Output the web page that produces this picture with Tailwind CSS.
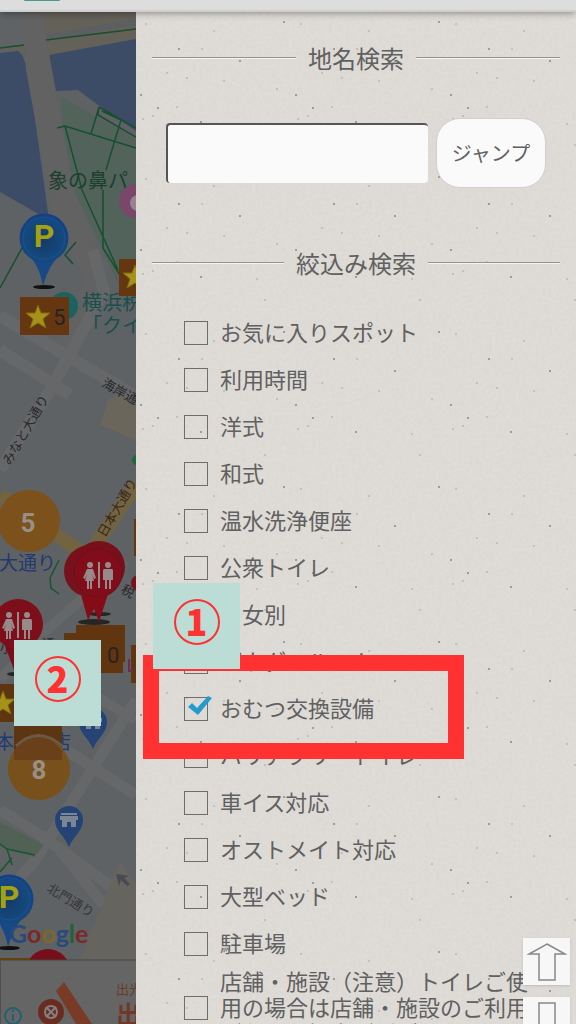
<!DOCTYPE html>
<html lang="ja">

<head>
    <meta charset="UTF-8">
    <meta name="viewport" content="width=device-width, initial-scale=1.0">
    <title>トイレマップ - 検索</title>
    <script src="https://cdn.jsdelivr.net/npm/@tailwindcss/browser@4"></script>
</head>

<body class="h-screen overflow-hidden bg-[#5f6062] font-['Noto_Sans_CJK_JP',sans-serif] text-[#606060]">
    <div class="relative flex h-full flex-col overflow-hidden">

        <!-- Browser bar -->
        <header class="relative z-10 h-3 shrink-0 border-b-2 border-[#cfcfcf] bg-[#dddddd] shadow-md shadow-black/20">
            <div class="ml-6 h-px w-9 rounded-b bg-[#479a92]"></div>
        </header>

        <main class="flex min-h-0 flex-1">

            <!-- Dimmed map -->
            <section class="relative w-34 shrink-0 overflow-hidden bg-[#5f6264]" aria-label="地図">
                <svg class="absolute top-0 left-0" width="136" height="1012" viewBox="0 12 136 1012" font-family="'Noto Sans CJK JP', sans-serif">
                    <defs>
                        <radialGradient id="blue" cx="50%" cy="55%" r="55%">
                            <stop offset="0" stop-color="#123c68" />
                            <stop offset="0.75" stop-color="#15497f" />
                            <stop offset="1" stop-color="#123f86" />
                        </radialGradient>
                        <g id="parking">
                            <ellipse cx="0" cy="49" rx="11" ry="2" fill="#111" />
                            <path d="M-17 16Q-5 26-1 48Q5 26 17 16Z" fill="#174987" />
                            <circle r="24.500" fill="url(#blue)" />
                            <circle r="21" fill="none" stroke="#1c528b" stroke-width="1" />
                            <text y="9" text-anchor="middle" font-family="Roboto, sans-serif" font-size="32" font-weight="700" fill="#a6a112">P</text>
                        </g>
                        <g id="people" fill="#98898a">
                            <circle cx="-9" cy="-10" r="3" />
                            <path d="M-12-6h6l3 9-2 1-2-5 2 7h-2v8h-2v-8h-1v8h-2v-8h-2l2-7-2 5-2-1z" />
                            <rect x="-1" y="-13" width="2" height="26" />
                            <circle cx="9" cy="-10" r="3" />
                            <path d="M5-6h8q1 0 1 2v9h-2v-7v16h-2V5H8v9H6V-2v7H4v-9q0-2 1-2z" />
                        </g>
                        <path id="star" d="M0-12 3-4 12-4 5 2 8 11 0 6-8 11-5 2-12-4-3-4Z" fill="#a49318" stroke="#7f6614" />
                        <g id="shop">
                            <path d="M-14 0a14 14 0 1 1 28 0c0 11-9 15-14 27C-5 15-14 11-14 0Z" fill="#254374" />
                            <path d="M-8-7H8v2H-8zM-9-4H9v4H-9zM-7 0H7v7H2V2h-4v5h-5z" fill="#7b8695" />
                        </g>
                    </defs>

                    <!-- Land and water -->
                    <path d="M0 12H136V40L48 57 0 50Z" fill="#646159" />
                    <path d="M0 12H22L24 45 0 48Z" fill="#606365" />
                    <path d="M45 38 136 22" stroke="#5c5f62" stroke-width="6" />
                    <path d="M0 53 18 51Q24 54 27 72L31 90 49 220 0 192Z" fill="#3c4b66" />
                    <path d="M49 55 136 39V131L98 105 78 90 56 91Z" fill="#3c4b66" />
                    <path d="M22 12H42L57 100 74 190 103 266 94 310 70 365 55 345 85 280 50 200 26 70Z" fill="#626262" />
                    <path d="M61 97 90 113 136 139V290L120 288 92 228 74 190 62 125Z" fill="#52635b" />
                    <path d="M0 48 24 45M46 40 136 29" fill="none" stroke="#18502e" stroke-width="1.500" />
                    <path d="M57 128 65 126 136 148M65 126 82 190 118 270M99 107 91 134M99 107 136 128M99 107 98 115 136 137M102 111 121 120 106 170M103 190V248L120 275M22 248 0 288M76 242 65 255 73 264 68 258" fill="none" stroke="#174f2f" stroke-width="1.500" />

                    <!-- Streets -->
                    <g fill="none" stroke="#666768">
                        <path d="M0 316 135 396M0 350 70 395M93 250 104 292 49 392 0 470" stroke-width="12" />
                        <path d="M125 560 40 636 0 680M72 682 136 720" stroke-width="10" />
                        <path d="M136 700 34 862 0 900M66 750 136 795M0 810 45 838 136 905M60 850 136 945" stroke-width="11" />
                    </g>
                    <path d="M108 400 120 394 136 405V440L100 425Z" fill="#6a665c" />
                    <path d="M120 860 136 885V960H80Z" fill="#66645e" />
                    <path d="M0 495 85 555M92 550 136 485" stroke="#726441" stroke-width="14" />
                    <path d="M0 822 44 845 34 857 0 845Z" fill="#526156" />
                    <path d="M59 560 50 578 51 588 59 594M0 844 7 849 35 855M7 849 12 865M0 872 12 858" fill="none" stroke="#17572d" stroke-width="1.500" />

                    <!-- Place names -->
                    <text x="48" y="188" font-size="20" fill="#1b402e">象の鼻パ</text>
                    <circle cx="136" cy="201" r="17" fill="#7a4669" />
                    <circle cx="138" cy="203" r="8" fill="#998292" />
                    <circle cx="64" cy="306" r="14" fill="#1d6260" />
                    <text x="82" y="310" font-size="20" fill="#174f4d">横浜税</text>
                    <text x="82" y="333" font-size="20" fill="#174f4d">「クイ</text>
                    <g font-size="13" fill="#29292b">
                        <text transform="translate(101 386) rotate(29)">海岸通り</text>
                        <text transform="translate(10 466) rotate(-60)">みなと大通り</text>
                        <text transform="translate(105 538) rotate(-60)" fill="#38271c">日本大通り</text>
                        <text transform="translate(46 891) rotate(31)" fill="#353638">北門通り</text>
                        <text x="42" y="648">通</text>
                        <text x="0" y="652">小</text>
                        <text x="120" y="592" transform="rotate(30 120 592)">税</text>
                    </g>
                    <text x="-1" y="570" font-size="19" fill="#213a70">大通り</text>
                    <text x="-5" y="749" font-size="19" fill="#213a70">本大通店</text>

                    <!-- Pins and badges -->
                    <use href="#parking" x="44" y="238" />
                    <rect x="20" y="297" width="49" height="38" fill="#663610" />
                    <use href="#star" x="38" y="317" />
                    <text x="53" y="325" font-family="Roboto, sans-serif" font-size="22" fill="#252423">5</text>
                    <rect x="119" y="259" width="17" height="37" fill="#663610" />
                    <use href="#star" x="135" y="277" />
                    <circle cx="137" cy="460" r="5" fill="#186c39" />
                    <circle cx="29" cy="521" r="31" fill="#7d511b" />
                    <text x="28" y="532" text-anchor="middle" font-family="Roboto, sans-serif" font-size="26" font-weight="700" fill="#989086">5</text>
                    <rect x="134" y="519" width="2" height="37" fill="#663610" />
                    <path d="M64 633h12v-8h49v37h-2v11H64Z" fill="#61350f" />
                    <rect x="131" y="645" width="5" height="38" fill="#61350f" />
                    <path d="M129 659v12h4" fill="none" stroke="#692c57" stroke-width="2" />
                    <text x="107" y="663" font-family="Roboto, sans-serif" font-size="22" fill="#252423">0</text>
                    <circle cx="139" cy="583" r="8" fill="#79121b" />
                    <ellipse cx="100" cy="614" rx="11" ry="2" fill="#252525" />
                    <ellipse cx="94" cy="622" rx="16" ry="3" fill="#252525" />
                    <path d="M80 591 88 620 94 609 99 622 109 591Z" fill="#850c16" />
                    <circle cx="90" cy="571" r="26" fill="#77121c" />
                    <circle cx="99" cy="567" r="26" fill="#78101b" />
                    <circle cx="98" cy="573" r="24" fill="#800d19" stroke="#6b111a" />
                    <use href="#people" x="99" y="575" />
                    <path d="M3 640 14 670 25 640Z" fill="#7c0d18" />
                    <ellipse cx="15" cy="674" rx="8" ry="2" fill="#252525" />
                    <circle cx="18" cy="624" r="25" fill="#7d0f1a" />
                    <use href="#people" x="18" y="625" />
                    <rect x="0" y="684" width="25" height="38" fill="#5f3511" />
                    <use href="#star" x="3" y="703" />
                    <use href="#shop" x="93" y="722" />
                    <rect x="14" y="726" width="48" height="34" fill="#5c3513" />
                    <circle cx="39" cy="769" r="31" fill="#78501b" />
                    <path d="M14 751Q38 720 62 751V760H14Z" fill="#69401a" />
                    <path d="M16 746Q38 725 62 746" fill="none" stroke="#6a5a45" stroke-width="3" />
                    <text x="39" y="779" text-anchor="middle" font-family="Roboto, sans-serif" font-size="26" font-weight="700" fill="#989086">8</text>
                    <use href="#shop" x="69" y="820" />
                    <path d="M116 874 129 876 124 878 130 884 127 886 121 880 119 886Z" fill="#474a4e" />
                    <use href="#parking" x="9" y="899" />

                    <text x="9" y="943" font-family="Lato, sans-serif" font-size="25" font-weight="700"><tspan fill="#294b7c">G</tspan><tspan fill="#7c2828">o</tspan><tspan fill="#806820">o</tspan><tspan fill="#294b7c">g</tspan><tspan fill="#246039">l</tspan><tspan fill="#7c2828">e</tspan></text>
                    <circle cx="48" cy="971" r="22" fill="#780e19" />

                    <!-- Banner -->
                    <rect x="0" y="960" width="136" height="64" fill="#656565" />
                    <path d="M0 960H136" stroke="#454545" />
                    <path d="M0 960V1024" stroke="#505050" stroke-width="2" />
                    <path d="M0 959H30" stroke="#65400f" stroke-width="2" />
                    <path d="M56 991 64 982 92 1024H76Z" fill="#793b28" />
                    <circle cx="51" cy="1012" r="13" fill="#692c1e" />
                    <g fill="none" stroke="#858080" stroke-width="2">
                        <circle cx="51" cy="1012" r="6" />
                        <path d="M46 1007 56 1017M56 1007 46 1017" />
                    </g>
                    <circle cx="13" cy="1016" r="8" fill="none" stroke="#20606f" stroke-width="2" />
                    <path d="M13 1014V1021M13 1010V1012" stroke="#20606f" stroke-width="2" />
                    <text x="116" y="994" font-size="13" fill="#6c392b">出光</text>
                    <text x="116" y="1024" font-size="25" font-weight="700" fill="#713827">出光</text>
                </svg>
            </section>

            <!-- Search panel -->
            <aside class="relative min-w-0 flex-1 bg-[#dfdcd8]">
                <!-- Recycled paper texture -->
                <svg class="absolute inset-0 h-full w-full" aria-hidden="true">
                    <defs>
                        <filter id="grain">
                            <feTurbulence type="fractalNoise" baseFrequency="0.3" numOctaves="3" seed="4" />
                            <feColorMatrix values="0 0 0 0 0.4  0 0 0 0 0.38  0 0 0 0 0.34  0.5 0 0 0 -0.17" />
                        </filter>
                        <pattern id="specks" width="155" height="155" patternUnits="userSpaceOnUse">
                            <g fill="#8b8781">
                                <circle cx="148" cy="10" r="1" /><circle cx="43" cy="37" r="1" /><circle cx="104" cy="49" r="1" />
                                <circle cx="5" cy="83" r="1" /><circle cx="22" cy="96" r="1" /><circle cx="65" cy="110" r="1" />
                            </g>
                            <g fill="#bbb7b1">
                                <circle cx="10" cy="12" r="1" /><circle cx="66" cy="37" r="1" /><circle cx="78" cy="19" r="1" />
                                <circle cx="31" cy="61" r="1" /><circle cx="51" cy="66" r="1" /><circle cx="88" cy="69" r="1" />
                                <circle cx="17" cy="104" r="1" /><circle cx="41" cy="95" r="1" /><circle cx="7" cy="107" r="1" />
                                <circle cx="121" cy="112" r="1" /><circle cx="129" cy="133" r="1" /><circle cx="141" cy="77" r="1" />
                            </g>
                        </pattern>
                    </defs>
                    <rect width="100%" height="100%" filter="url(#grain)" opacity="0.3" />
                    <rect width="100%" height="100%" fill="url(#specks)" />
                </svg>

                <div class="relative px-4">
                    <h2 class="flex h-[92px] items-center gap-3 text-2xl">
                        <span class="h-[2px] flex-1 border-t border-[#8f9496] bg-[#f3f3f2]"></span>
                        地名検索
                        <span class="h-[2px] flex-1 border-t border-[#8f9496] bg-[#f3f3f2]"></span>
                    </h2>

                    <form class="mt-3.5 flex items-center gap-2 px-3.5">
                        <input type="text" aria-label="地名"
                            class="h-15 min-w-0 flex-1 rounded-sm border-t-2 border-l-2 border-[#555555] bg-[#fafafa] px-3 text-xl">
                        <button type="button"
                            class="h-17.5 w-27.5 rounded-3xl border border-[#d0d0d0] bg-[#fafafa] text-xl">ジャンプ</button>
                    </form>

                    <h2 class="mt-[29px] flex h-[92px] items-center gap-3 text-2xl">
                        <span class="h-[2px] flex-1 border-t border-[#8f9496] bg-[#f3f3f2]"></span>
                        絞込み検索
                        <span class="h-[2px] flex-1 border-t border-[#8f9496] bg-[#f3f3f2]"></span>
                    </h2>

                    <div id="filters" class="pr-8 pl-8 text-[22px] leading-[26px]"></div>
                </div>
            </aside>
        </main>

        <!-- Scroll buttons -->
        <div class="absolute top-[938px] right-1.5 flex flex-col gap-3">
            <button type="button" aria-label="上へ" class="flex h-[47px] w-[47px] items-center justify-center bg-[#f7f7f7] shadow">
                <svg width="40" height="40" viewBox="0 0 40 40" fill="none" stroke="#888" stroke-width="1.500">
                    <path d="M20 2 38 12H28V38H12V12H2Z" />
                </svg>
            </button>
            <button type="button" aria-label="下へ" class="flex h-[47px] w-[47px] items-center justify-center bg-[#f7f7f7] shadow">
                <svg width="40" height="40" viewBox="0 0 40 40" fill="none" stroke="#888" stroke-width="1.500">
                    <path d="M20 38 38 28H28V2H12V28H2Z" />
                </svg>
            </button>
        </div>

        <!-- Step annotations -->
        <div class="pointer-events-none absolute top-[655px] left-[143px] h-[104px] w-[321px] border-16 border-[#ff3131]"></div>
        <div class="absolute top-[583px] left-[153px] flex h-[86px] w-[87px] items-center justify-center bg-[#bbddd5] pb-2">
            <span class="flex h-[46px] w-[46px] items-center justify-center rounded-full border-2 border-[#ff3131] pb-1 text-4xl font-black text-[#ff3131]">1</span>
        </div>
        <div class="absolute top-[640px] left-[14px] flex h-[86px] w-[87px] items-center justify-center bg-[#bbddd5] pb-2">
            <span class="flex h-[46px] w-[46px] items-center justify-center rounded-full border-2 border-[#ff3131] pb-1 text-4xl font-black text-[#ff3131]">2</span>
        </div>
    </div>

    <script>
        const filters = [
            'お気に入りスポット', '利用時間', '洋式', '和式', '温水洗浄便座', '公衆トイレ', '男女別',
            'パウダールーム', 'おむつ交換設備', 'バリアフリートイレ', '車イス対応', 'オストメイト対応',
            '大型ベッド', '駐車場', '店舗・施設（注意）トイレご使用の場合は店舗・施設のご利用が必要な場合がございます'
        ];

        const list = document.getElementById('filters');
        filters.forEach((name) => {
            const checked = name === 'おむつ交換設備';
            const row = document.createElement('label');
            row.className = 'flex min-h-[47px] items-center gap-3';
            row.innerHTML = `
                <span class="relative h-6 w-6 shrink-0">
                    <input type="checkbox" class="peer block h-6 w-6 appearance-none border border-[#6d6d6d]" ${checked ? 'checked' : ''}>
                    <svg class="pointer-events-none absolute -top-1 left-0 hidden peer-checked:block" width="30" height="26" viewBox="0 0 30 26">
                        <path d="M4 14 8 10 13 15 24 3 28 5 14 22Z" fill="#259bcd" />
                    </svg>
                </span>
                <span class="pb-[3px]">${name}</span>`;
            list.appendChild(row);
        });
    </script>
</body>

</html>
